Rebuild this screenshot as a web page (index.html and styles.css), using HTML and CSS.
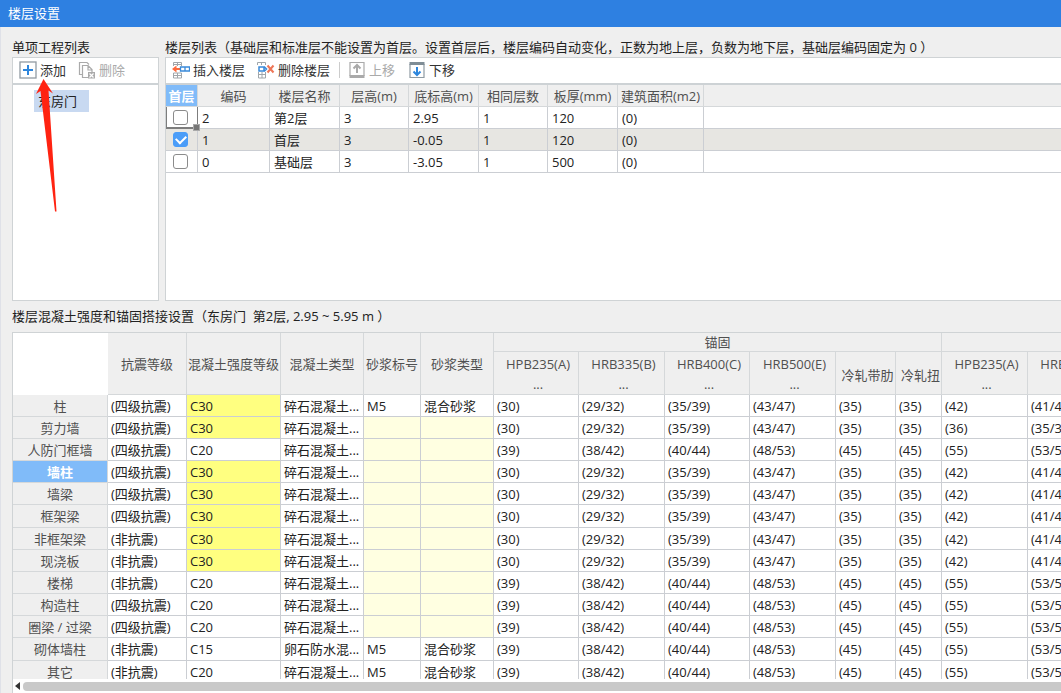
FILE: index.html
```html
<!DOCTYPE html>
<html lang="zh-CN">
<head>
<meta charset="utf-8">
<title>楼层设置</title>
<link rel="stylesheet" href="styles.css">
</head>
<body>
<header class="titlebar">楼层设置</header>
<main class="content">
  <div class="upper">
    <section class="projects">
      <h2 class="caption">单项工程列表</h2>
      <div class="panel">
        <div class="toolbar">
          <button class="tool" type="button">
            <svg class="icon" viewBox="0 0 18 18"><rect x="1" y="1" width="16" height="16" fill="#fff" stroke="#929ba3" stroke-width="1.3"/><path d="M9 4v10M4 9h10" stroke="#2d86dd" stroke-width="2"/></svg>
            添加</button>
          <button class="tool tool-delete" type="button" disabled>
            <svg class="icon" viewBox="0 0 18 18" fill="none" stroke="#aaa" stroke-width="1.2"><path d="M4 13.500H1.500V1.500H9l2 2M11 16.500H4.500V4.500H10l4 4V11M10 4.500V9h4"/><rect x="10" y="11" width="7" height="6.500" fill="#aaa" stroke="none"/><path d="M11.500 12.500l4 4M15.500 12.500l-4 4" stroke="#fff"/></svg>
            删除</button>
        </div>
        <ul class="tree"><li class="node">东房门</li></ul>
        <svg class="pointer" viewBox="0 0 24 136"><path d="M8.500 3L1 18l4.500-3L20 135.500h1.500L13.500 14.500l4.500 3z" fill="#ff2311"/></svg>
      </div>
    </section>
    <section class="floors">
      <h2 class="caption">楼层列表（基础层和标准层不能设置为首层。设置首层后，楼层编码自动变化，正数为地上层，负数为地下层，基础层编码固定为 0 ）</h2>
      <div class="panel">
        <div class="toolbar">
          <button class="tool" type="button">
            <svg class="icon" viewBox="0 0 18 18" fill="none"><path d="M1.500 5V1.500h8V5M5.500 1.500V5M1.500 3.500h8M1.500 12v5h8v-5zM5.500 12v5M1.500 14.500h8" stroke="#a0a6aa"/><path d="M9 8H2" stroke="#ff6a3d" stroke-width="2"/><path d="M4.500 4.500L0 8l4.500 3.500z" fill="#ff6a3d"/><path d="M8.500 6h9v4h-9zM13 6v4" stroke="#3989d9" stroke-width="1.300"/></svg>
            插入楼层</button>
          <button class="tool tool-remove" type="button">
            <svg class="icon" viewBox="0 0 18 18" fill="none"><path d="M.5 4V1.500h8V4M4.500 1.500V4M1 13.500h8M1.500 11v6h7v-6M5 11v6" stroke="#a0a6aa"/><path d="M2 6h5v4H2zM7 5.500L9.500 8 7 10.500" stroke="#3989d9" stroke-width="1.500"/><path d="M10.500 4.500l6 7M16.500 4.500l-6 7" stroke="#ee7657" stroke-width="2"/></svg>
            删除楼层</button>
          <span class="divider"></span>
          <button class="tool" type="button" disabled>
            <svg class="icon" viewBox="0 0 18 18" fill="none" stroke="#aaa"><path d="M2 1.500h14v13H2z" stroke-width="1.200"/><path d="M1.500 15.500h15" stroke-width="3"/><path d="M9 12V4M5.500 7.500L9 4l3.500 3.500" stroke-width="2"/></svg>
            上移</button>
          <button class="tool tool-down" type="button">
            <svg class="icon" viewBox="0 0 18 18" fill="none"><path d="M2 3.500h14v13H2z" stroke="#8f9ba3" stroke-width="1.200"/><path d="M1.500 2.500h15" stroke="#7f8d96" stroke-width="3"/><path d="M9 6v8M5.500 10.500L9 14l3.500-3.500" stroke="#2d86dd" stroke-width="2"/></svg>
            下移</button>
        </div>
        <table class="grid floor-grid">
          <colgroup><col class="w32"><col class="w72"><col class="w70"><col class="w69"><col class="w70"><col class="w69"><col class="w70"><col class="w86"><col></colgroup>
          <thead><tr><th class="picked">首层</th><th>编码</th><th>楼层名称</th><th>层高(m)</th><th>底标高(m)</th><th>相同层数</th><th>板厚(mm)</th><th>建筑面积(m2)</th><th class="rest"></th></tr></thead>
          <tbody>
            <tr><td class="check focus"><input type="checkbox" aria-label="第2层设为首层"></td><td>2</td><td>第2层</td><td>3</td><td>2.95</td><td>1</td><td>120</td><td>(0)</td><td class="rest"></td></tr>
            <tr class="current"><td class="check"><input type="checkbox" aria-label="首层设为首层" checked></td><td>1</td><td>首层</td><td>3</td><td>-0.05</td><td>1</td><td>120</td><td>(0)</td><td class="rest"></td></tr>
            <tr><td class="check"><input type="checkbox" aria-label="基础层设为首层"></td><td>0</td><td>基础层</td><td>3</td><td>-3.05</td><td>1</td><td>500</td><td>(0)</td><td class="rest"></td></tr>
          </tbody>
        </table>
      </div>
    </section>
  </div>
  <section class="lower">
    <h2 class="caption">楼层混凝土强度和锚固搭接设置（东房门&nbsp; 第2层, 2.95 ~ 5.95 m ）</h2>
    <div class="panel">
      <div class="viewport">
        <table class="grid strength-grid">
          <colgroup><col class="w95"><col class="w79"><col class="w94"><col class="w83"><col class="w57"><col class="w73"><col class="w85"><col class="w86"><col class="w85"><col class="w86"><col class="w60"><col class="w46"><col class="w86"><col class="w86"></colgroup>
          <thead>
            <tr class="group"><th class="blank" rowspan="2"></th><th rowspan="2">抗震等级</th><th rowspan="2">混凝土强度等级</th><th rowspan="2">混凝土类型</th><th rowspan="2">砂浆标号</th><th rowspan="2">砂浆类型</th><th colspan="6">锚固</th><th colspan="2"></th></tr>
            <tr class="sub"><th>HPB235(A)<br>...</th><th>HRB335(B)<br>...</th><th>HRB400(C)<br>...</th><th>HRB500(E)<br>...</th><th class="single">冷轧带肋</th><th class="single">冷轧扭</th><th>HPB235(A)<br>...</th><th>HRB335(B)<br>...</th></tr>
          </thead>
          <tbody>
            <tr><th>柱</th><td>(四级抗震)</td><td class="hot">C30</td><td>碎石混凝土...</td><td>M5</td><td>混合砂浆</td><td>(30)</td><td>(29/32)</td><td>(35/39)</td><td>(43/47)</td><td>(35)</td><td>(35)</td><td>(42)</td><td>(41/45)</td></tr>
            <tr><th>剪力墙</th><td>(四级抗震)</td><td class="hot">C30</td><td>碎石混凝土...</td><td class="na"></td><td class="na"></td><td>(30)</td><td>(29/32)</td><td>(35/39)</td><td>(43/47)</td><td>(35)</td><td>(35)</td><td>(36)</td><td>(35/39)</td></tr>
            <tr><th>人防门框墙</th><td>(四级抗震)</td><td>C20</td><td>碎石混凝土...</td><td class="na"></td><td class="na"></td><td>(39)</td><td>(38/42)</td><td>(40/44)</td><td>(48/53)</td><td>(45)</td><td>(45)</td><td>(55)</td><td>(53/59)</td></tr>
            <tr><th class="picked">墙柱</th><td>(四级抗震)</td><td class="hot">C30</td><td>碎石混凝土...</td><td class="na"></td><td class="na"></td><td>(30)</td><td>(29/32)</td><td>(35/39)</td><td>(43/47)</td><td>(35)</td><td>(35)</td><td>(42)</td><td>(41/45)</td></tr>
            <tr><th>墙梁</th><td>(四级抗震)</td><td class="hot">C30</td><td>碎石混凝土...</td><td class="na"></td><td class="na"></td><td>(30)</td><td>(29/32)</td><td>(35/39)</td><td>(43/47)</td><td>(35)</td><td>(35)</td><td>(42)</td><td>(41/45)</td></tr>
            <tr><th>框架梁</th><td>(四级抗震)</td><td class="hot">C30</td><td>碎石混凝土...</td><td class="na"></td><td class="na"></td><td>(30)</td><td>(29/32)</td><td>(35/39)</td><td>(43/47)</td><td>(35)</td><td>(35)</td><td>(42)</td><td>(41/45)</td></tr>
            <tr><th>非框架梁</th><td>(非抗震)</td><td class="hot">C30</td><td>碎石混凝土...</td><td class="na"></td><td class="na"></td><td>(30)</td><td>(29/32)</td><td>(35/39)</td><td>(43/47)</td><td>(35)</td><td>(35)</td><td>(42)</td><td>(41/45)</td></tr>
            <tr><th>现浇板</th><td>(非抗震)</td><td class="hot">C30</td><td>碎石混凝土...</td><td class="na"></td><td class="na"></td><td>(30)</td><td>(29/32)</td><td>(35/39)</td><td>(43/47)</td><td>(35)</td><td>(35)</td><td>(42)</td><td>(41/45)</td></tr>
            <tr><th>楼梯</th><td>(非抗震)</td><td>C20</td><td>碎石混凝土...</td><td class="na"></td><td class="na"></td><td>(39)</td><td>(38/42)</td><td>(40/44)</td><td>(48/53)</td><td>(45)</td><td>(45)</td><td>(55)</td><td>(53/59)</td></tr>
            <tr><th>构造柱</th><td>(四级抗震)</td><td>C20</td><td>碎石混凝土...</td><td class="na"></td><td class="na"></td><td>(39)</td><td>(38/42)</td><td>(40/44)</td><td>(48/53)</td><td>(45)</td><td>(45)</td><td>(55)</td><td>(53/59)</td></tr>
            <tr><th>圈梁 / 过梁</th><td>(四级抗震)</td><td>C20</td><td>碎石混凝土...</td><td class="na"></td><td class="na"></td><td>(39)</td><td>(38/42)</td><td>(40/44)</td><td>(48/53)</td><td>(45)</td><td>(45)</td><td>(55)</td><td>(53/59)</td></tr>
            <tr><th>砌体墙柱</th><td>(非抗震)</td><td>C15</td><td>卵石防水混...</td><td>M5</td><td>混合砂浆</td><td>(39)</td><td>(38/42)</td><td>(40/44)</td><td>(48/53)</td><td>(45)</td><td>(45)</td><td>(55)</td><td>(53/59)</td></tr>
            <tr><th>其它</th><td>(非抗震)</td><td>C20</td><td>碎石混凝土...</td><td>M5</td><td>混合砂浆</td><td>(39)</td><td>(38/42)</td><td>(40/44)</td><td>(48/53)</td><td>(45)</td><td>(45)</td><td>(55)</td><td>(53/59)</td></tr>
          </tbody>
        </table>
      </div>
      <div class="scrollbar">
        <button class="scroll-left" type="button" aria-label="向左滚动"><svg viewBox="0 0 5 8"><path d="M5 0v8L0 4z" fill="#333"/></svg></button>
        <div class="thumb"></div>
      </div>
    </div>
  </section>
</main>
</body>
</html>
```
FILE: styles.css
```css
* { box-sizing: border-box; }
body {
  margin: 0;
  height: 100vh;
  display: flex;
  flex-direction: column;
  overflow: hidden;
  background: #efefef;
  color: #222;
  font: 13px/20px "Open Sans", "Noto Sans CJK SC", sans-serif;
}
.titlebar {
  flex: none;
  height: 27px;
  padding: 3px 8px;
  background: #2e80e1;
  color: #fff;
}
.content {
  flex: 1;
  min-height: 0;
  display: flex;
  flex-direction: column;
  padding: 11px 0 0 11px;
  border-left: 1px solid #dfe1e8;
}
.upper { flex: none; display: flex; gap: 6px; }
.projects { flex: none; width: 147px; }
.floors { flex: 1; min-width: 0; }
.caption {
  margin: 0;
  height: 19px;
  font-size: 13px;
  font-weight: 400;
  line-height: 19px;
  white-space: nowrap;
  overflow: hidden;
}
.panel {
  position: relative;
  background: #fff;
  border: 1px solid #cfd3d5;
}
.upper .panel { height: 244px; }
.floors .panel, .lower .panel { border-right: 0; }
.toolbar {
  display: flex;
  align-items: center;
  height: 27px;
  padding: 0 6px 2px;
  border-bottom: 2px solid #cdd2d5;
}
.tool {
  display: flex;
  align-items: center;
  gap: 3px;
  padding: 0;
  border: 0;
  background: none;
  color: #333;
  font: inherit;
  white-space: nowrap;
}
.tool:disabled { color: #aaa; }
.tool-delete { margin-left: 12px; }
.tool-remove { margin-left: 12px; }
.tool-down { margin-left: 13px; }
.icon { width: 18px; height: 18px; flex: none; }
.divider { width: 1px; height: 16px; margin: 0 8px 0 9px; background: #ccc; }
.tree { margin: 0; padding: 5px 0 0 21px; list-style: none; }
.node { width: 55px; height: 22px; padding: 0 4px; background: #c8d9f1; line-height: 22px; }
.pointer { position: absolute; left: 22px; top: 18px; width: 24px; height: 136px; }

.grid {
  table-layout: fixed;
  border-collapse: separate;
  border-spacing: 0;
}
.grid th, .grid td {
  height: 22px;
  padding: 0 4px;
  border-right: 1px solid #cbced3;
  border-bottom: 1px solid #cbced3;
  line-height: 20px;
  white-space: nowrap;
  overflow: hidden;
}
.grid th {
  padding: 0;
  background: #efefef;
  border-color: #d5d8da;
  color: #505050;
  font-weight: 400;
}
.grid td { text-align: left; }
.strength-grid td { padding: 0 3px; }
.grid th.picked { background: #80bbf9; color: #fff; font-weight: 700; }
.floor-grid { width: 100%; }
.grid .rest { border-right: 0; }
.grid td.check { position: relative; padding: 0 0 0 7px; overflow: visible; line-height: 0; }
.current td { background: #e7e6e2; }
.grid td.focus { border-right-color: #7d7d7d; border-bottom-color: #7d7d7d; box-shadow: inset 1px 0 #7d7d7d, inset 0 -1px #7d7d7d; }
.focus::after {
  content: "";
  position: absolute;
  z-index: 1;
  right: -3px;
  bottom: -3px;
  width: 5px;
  height: 5px;
  background: #777;
  border: 1px solid #aaa;
}
.check input {
  appearance: none;
  display: grid;
  place-items: center;
  width: 15px;
  height: 15px;
  margin: 0;
  border: 1px solid #8b8b8b;
  border-radius: 3px;
  background: #fff;
}
.check input:checked { border-color: #4b9df8; background: #4b9df8; }
.check input:checked::before {
  content: "";
  width: 8px;
  height: 5px;
  margin-bottom: 3px;
  border-left: 2px solid #fff;
  border-bottom: 2px solid #fff;
  transform: rotate(-45deg);
}

.lower { flex: 1; min-height: 0; display: flex; flex-direction: column; padding-top: 6px; }
.lower .caption { flex: none; height: 25px; }
.lower .panel { flex: 1; min-height: 0; display: flex; flex-direction: column; border-bottom: 0; }
.viewport { flex: 1; min-height: 0; overflow: hidden; }
.strength-grid { width: 1101px; }
.strength-grid thead .blank { background: #fff; border-color: #fff; }
.strength-grid .group th { height: 19px; line-height: 18px; }
.strength-grid .sub th { height: 43px; padding-left: 4px; padding-top: 2px; }
.strength-grid .sub .single { padding-top: 4px; }
.strength-grid tbody tr:nth-child(6n) > * { height: 23px; }
.strength-grid td.hot { background: #ffff80; }
.strength-grid td.na { background: #ffffe1; }
.scrollbar { flex: none; display: flex; align-items: center; height: 14px; padding-left: 2px; gap: 3px; background: #fff; }
.scroll-left { display: flex; padding: 0; border: 0; background: none; }
.scroll-left svg { width: 5px; height: 8px; }
.thumb { flex: 1; height: 9px; border-radius: 4px 0 0 4px; background: #c9c9c9; }

.w32 { width: 32px; }
.w46 { width: 46px; }
.w57 { width: 57px; }
.w60 { width: 60px; }
.w69 { width: 69px; }
.w70 { width: 70px; }
.w72 { width: 72px; }
.w73 { width: 73px; }
.w79 { width: 79px; }
.w83 { width: 83px; }
.w85 { width: 85px; }
.w86 { width: 86px; }
.w94 { width: 94px; }
.w95 { width: 95px; }
```
